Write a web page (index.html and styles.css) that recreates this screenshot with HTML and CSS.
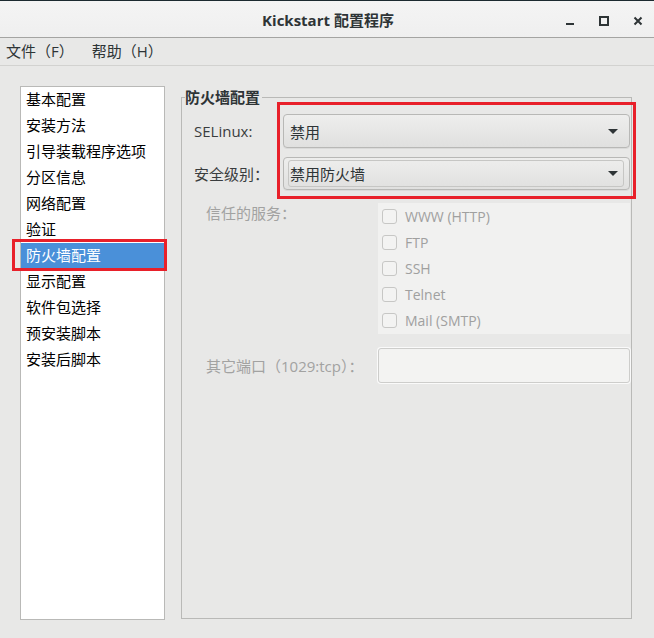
FILE: index.html
```html
<!DOCTYPE html>
<html lang="zh-CN">
<head>
    <meta charset="UTF-8">
    <title>Kickstart 配置程序</title>
    <link rel="stylesheet" href="styles.css">
</head>
<body>
    <div class="titlebar">
        <div class="title">Kickstart 配置程序</div>
        <div class="win-buttons">
            <svg width="10" height="10" viewBox="0 0 10 10"><rect x="1" y="7" width="8" height="2" fill="#2e3436"/></svg>
            <svg width="10" height="10" viewBox="0 0 10 10"><rect x="1" y="1" width="8" height="8" fill="none" stroke="#2e3436" stroke-width="2"/></svg>
            <svg width="10" height="10" viewBox="0 0 10 10"><path d="M1.5 1.5 L8.5 8.5 M8.5 1.5 L1.5 8.5" stroke="#2e3436" stroke-width="2"/></svg>
        </div>
    </div>

    <div class="menubar">
        <span class="menu-item">文件（F）</span>
        <span class="menu-item">帮助（H）</span>
    </div>

    <div class="main">
        <ul class="nav-list">
            <li>基本配置</li>
            <li>安装方法</li>
            <li>引导装载程序选项</li>
            <li>分区信息</li>
            <li>网络配置</li>
            <li>验证</li>
            <li class="selected">防火墙配置</li>
            <li>显示配置</li>
            <li>软件包选择</li>
            <li>预安装脚本</li>
            <li>安装后脚本</li>
        </ul>

        <fieldset class="frame">
            <legend>防火墙配置</legend>
            <div class="frame-body">
                <div class="top-grid">
                    <label class="field-label">SELinux:</label>
                    <div class="combo">
                        <span>禁用</span>
                        <span class="arrow"></span>
                    </div>
                    <label class="field-label">安全级别：</label>
                    <div class="combo focused">
                        <div class="focus-ring">
                            <span>禁用防火墙</span>
                            <span class="arrow"></span>
                        </div>
                    </div>
                </div>

                <div class="lower-grid">
                    <label class="field-label disabled top">信任的服务：</label>
                    <div class="services">
                        <div class="check-row"><span class="check"></span>WWW (HTTP)</div>
                        <div class="check-row"><span class="check"></span>FTP</div>
                        <div class="check-row"><span class="check"></span>SSH</div>
                        <div class="check-row"><span class="check"></span>Telnet</div>
                        <div class="check-row"><span class="check"></span>Mail (SMTP)</div>
                    </div>
                    <label class="field-label disabled">其它端口（1029:tcp）：</label>
                    <div class="entry"></div>
                </div>
            </div>
        </fieldset>
    </div>

    <!-- 标注框 -->
    <div class="mark mark-list"></div>
    <div class="mark mark-combo"></div>
</body>
</html>
```

FILE: styles.css
```css
body {
    margin: 0;
    width: 654px;
    height: 638px;
    background: #e8e8e7;
    font-family: "Open Sans", "Noto Sans CJK SC", sans-serif;
    font-size: 15px;
    color: #2e3436;
    position: relative;
    overflow: hidden;
}
.titlebar {
    height: 36px;
    border-top: 1px solid #1c2a30;
    border-bottom: 1px solid #a4a4a2;
    background: linear-gradient(#f4f4f4, #efefef);
    display: flex;
    align-items: center;
    justify-content: center;
    position: relative;
}
.title {
    font-weight: bold;
    font-size: 15px;
    color: #2e3436;
    margin-left: 2px;
}
.win-buttons {
    position: absolute;
    right: 11px;
    top: 15px;
    display: flex;
    gap: 24px;
}
.menubar {
    height: 27px;
    border-bottom: 1px solid #d2d2d0;
    display: flex;
    align-items: center;
    padding-left: 6px;
    gap: 18px;
}
.menu-item {
    line-height: 27px;
}
.main {
    display: flex;
    align-items: flex-start;
    gap: 16px;
    padding: 20px 0 0 20px;
}
.nav-list {
    list-style: none;
    margin: 0;
    padding: 0;
    width: 145px;
    height: 534px;
    box-sizing: border-box;
    border: 1px solid #b9b9b7;
    background: #fff;
    color: #000;
}
.nav-list li {
    height: 26px;
    line-height: 24px;
    padding-left: 5px;
}
.nav-list li.selected {
    background: #4a90d9;
    color: #fff;
    height: 25px;
    margin-bottom: 1px;
}
.frame {
    margin: 0;
    padding: 0;
    width: 451px;
    height: 533px;
    box-sizing: border-box;
    border: 1px solid #b9b9b7;
    min-width: 0;
}
.frame legend {
    font-weight: bold;
    font-size: 15px;
    line-height: 22px;
    padding: 0 2px 0 0;
    margin-left: 3px;
    color: #2e3436;
}
.frame-body {
    padding: 6px 1px 0 12px;
}
.top-grid {
    display: grid;
    grid-template-columns: 89px 1fr;
    row-gap: 9px;
    align-items: center;
}
.field-label {
    color: #3a3d3e;
}
.field-label.disabled {
    color: #a2a2a1;
}
.field-label.top {
    align-self: start;
    line-height: 20px;
}
.combo {
    height: 34px;
    box-sizing: border-box;
    border: 1px solid #b8b8b6;
    border-radius: 4px;
    background: linear-gradient(#eeeeed, #e0e0df);
    box-shadow: 0 1px 0 rgba(0, 0, 0, 0.06);
    display: flex;
    align-items: center;
    justify-content: space-between;
    padding: 0 11px 0 6px;
}
.combo.focused {
    height: 33px;
    padding: 0 5px 0 4px;
}
.focus-ring {
    flex: 1;
    height: 27px;
    box-sizing: border-box;
    border: 1px solid #c6c6c4;
    border-radius: 3px;
    display: flex;
    align-items: center;
    justify-content: space-between;
    padding: 0 5px 0 1px;
}
.arrow {
    width: 0;
    height: 0;
    border-left: 5px solid transparent;
    border-right: 5px solid transparent;
    border-top: 5px solid #2e3436;
}
.lower-grid {
    display: grid;
    grid-template-columns: 172px 252px;
    margin: 13px 0 0 12px;
    row-gap: 14px;
    align-items: center;
}
.services {
    background: #f1f1f0;
    padding-bottom: 1px;
}
.check-row {
    height: 26px;
    display: flex;
    align-items: center;
    gap: 8px;
    padding-left: 4px;
    color: #a0a09f;
    font-size: 14px;
}
.check {
    width: 15px;
    height: 15px;
    box-sizing: border-box;
    border: 1px solid #c7c7c5;
    border-radius: 3px;
    background: #f3f3f2;
}
.entry {
    height: 35px;
    box-sizing: border-box;
    border: 1px solid #cdcdcb;
    border-radius: 3px;
    background: #f3f3f2;
    box-shadow: 0 0 0 1px #fafafa;
}
.mark {
    position: absolute;
    border: 3px solid #e8202a;
    box-sizing: border-box;
}
.mark-list {
    left: 12px;
    top: 239px;
    width: 155px;
    height: 32px;
}
.mark-combo {
    left: 277px;
    top: 102px;
    width: 359px;
    height: 97px;
}
```
